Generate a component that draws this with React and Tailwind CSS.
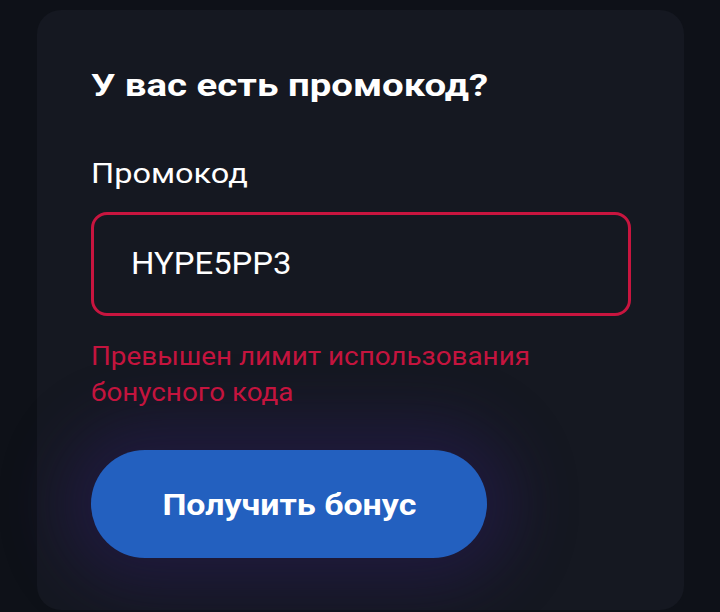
export default function App() {
  return (
    <div className="min-h-screen w-full bg-[#0e1118] pt-[10px] pl-[37px] pr-[36px]" style={{ fontFamily: "Roboto, 'Noto Sans', sans-serif" }}>
      <div className="h-[600px] rounded-[24px] bg-[#151821] pl-[54px] pr-[53px] pt-[57px]">
        <h2 className="text-[32px] leading-[36px] font-bold text-white">
          <span className="inline-block origin-left scale-x-[1.2] whitespace-nowrap">У вас есть промокод?</span>
        </h2>

        <label className="mt-[54px] block text-[28px] leading-[34px] text-white">
          <span className="inline-block origin-left scale-x-[1.16]">Промокод</span>
        </label>

        <div className="mt-[21px] h-[104px] rounded-[16px] border-[3px] border-[#c8153f] flex items-center pl-[37px]">
          <span className="inline-block origin-left scale-x-[1.06] text-[31px] text-white">HYPE5PP3</span>
        </div>

        <p className="mt-[22px] text-[26px] leading-[36px] text-[#c4143e]">
          <span className="inline-block origin-left scale-x-[1.07] whitespace-nowrap">Превышен лимит использования</span>
          <br />
          <span className="inline-block origin-left scale-x-[1.07] whitespace-nowrap">бонусного кода</span>
        </p>

        <button className="mt-[40px] h-[108px] w-[396px] rounded-full bg-[#2360bf] text-[30px] font-bold text-white shadow-[0_0_60px_30px_rgba(48,28,110,0.35)]">
          <span className="inline-block scale-x-[1.13]">Получить бонус</span>
        </button>
      </div>
    </div>
  );
}
